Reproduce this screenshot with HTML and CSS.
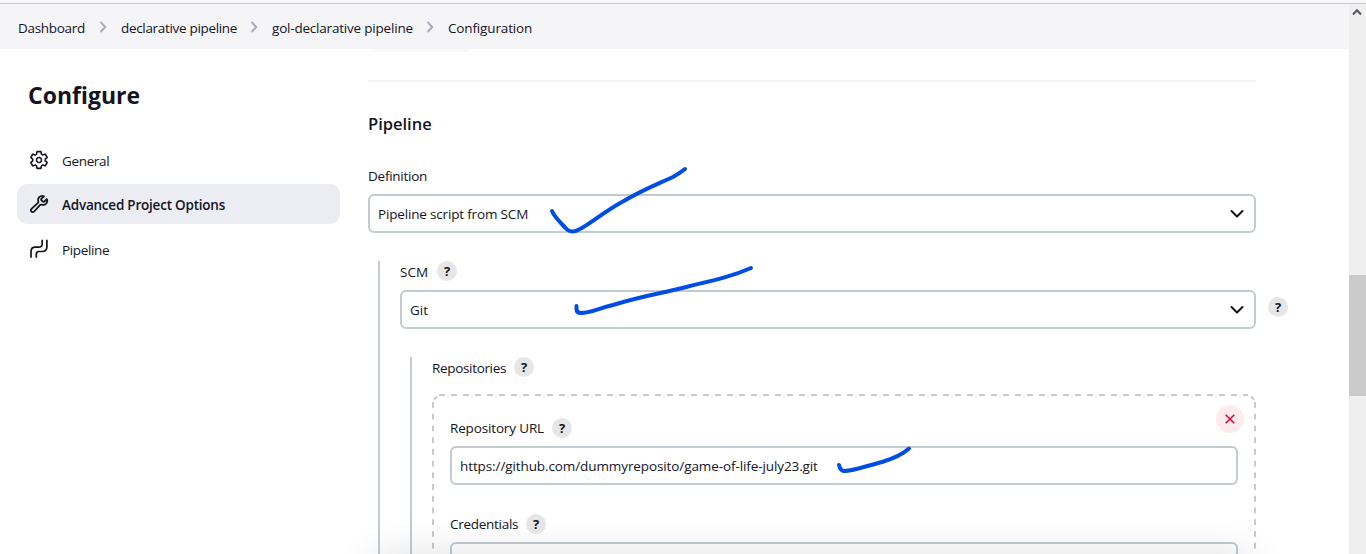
FILE: index.html
```
<!DOCTYPE html>
<html lang="en">
<head>
<meta charset="utf-8">
<title>Configure</title>
<link rel="stylesheet" href="styles.css">
</head>
<body>
<div class="window">
  <header class="crumbs">
    <span class="crumb c1">Dashboard</span>
    <svg class="sep" width="8" height="12" viewBox="0 0 8 12"><path d="M1.500 1 6.300 6 1.500 11"/></svg>
    <span class="crumb c2">declarative pipeline</span>
    <svg class="sep" width="8" height="12" viewBox="0 0 8 12"><path d="M1.500 1 6.300 6 1.500 11"/></svg>
    <span class="crumb c3">gol-declarative pipeline</span>
    <svg class="sep" width="8" height="12" viewBox="0 0 8 12"><path d="M1.500 1 6.300 6 1.500 11"/></svg>
    <span class="crumb c4">Configuration</span>
  </header>
  <div class="body">
    <aside class="side">
      <h1 class="title">Configure</h1>
      <nav class="nav">
        <a class="task"><svg class="ticon" viewBox="0 0 512 512"><path d="M262.29 192.31a64 64 0 1057.4 57.4 64.13 64.13 0 00-57.4-57.4zM416.39 256a154.34 154.34 0 01-1.53 20.79l45.21 35.46a10.81 10.81 0 012.45 13.75l-42.77 74a10.81 10.81 0 01-13.14 4.59l-44.9-18.08a16.11 16.11 0 00-15.17 1.75A164.48 164.48 0 01325 400.8a15.94 15.94 0 00-8.82 12.14l-6.73 47.89a11.08 11.08 0 01-10.68 9.17h-85.54a11.11 11.11 0 01-10.69-8.87l-6.72-47.82a16.07 16.07 0 00-9-12.22 155.3 155.3 0 01-21.46-12.57 16 16 0 00-15.11-1.71l-44.89 18.07a10.81 10.81 0 01-13.14-4.58l-42.77-74a10.8 10.8 0 012.45-13.75l38.21-30a16.05 16.05 0 006-14.08c-.36-4.17-.58-8.33-.58-12.5s.21-8.27.58-12.35a16 16 0 00-6.07-13.94l-38.19-30A10.81 10.81 0 0149.48 186l42.77-74a10.81 10.81 0 0113.14-4.59l44.9 18.08a16.11 16.11 0 0015.17-1.75A164.48 164.48 0 01187 111.2a15.94 15.94 0 008.82-12.14l6.73-47.89A11.08 11.08 0 01213.23 42h85.54a11.11 11.11 0 0110.69 8.87l6.72 47.82a16.07 16.07 0 009 12.22 155.3 155.3 0 0121.46 12.57 16 16 0 0015.11 1.71l44.89-18.07a10.81 10.81 0 0113.14 4.58l42.77 74a10.8 10.8 0 01-2.45 13.75l-38.21 30a16.05 16.05 0 00-6.05 14.08c.33 4.14.55 8.3.55 12.47z"/></svg><span class="w-general">General</span></a>
        <a class="task active"><svg class="ticon" viewBox="0 0 512 512"><path d="M393.87 190a32.1 32.1 0 01-45.25 0l-26.57-26.57a32.09 32.09 0 010-45.26L382.19 58a1 1 0 00-.3-1.64c-38.82-16.64-89.15-8.16-121.11 23.57-30.58 30.35-32.32 76-21.12 115.84a31.93 31.93 0 01-9.06 32.08L64 380a48.17 48.17 0 1068 68l153.86-167a31.93 31.93 0 0131.6-9.13c39.54 10.59 84.54 8.6 114.72-21.19 32.49-32 39.5-88.56 23.75-120.93a1 1 0 00-1.6-.26z"/></svg><span class="w-adv">Advanced Project Options</span></a>
        <a class="task"><svg class="ticon" viewBox="0 0 20 20"><path d="M2 18.700V12.600Q2 8.200 6.300 8.200H9.500Q13.200 8.200 13.200 5V.800M7.300 18.700V15Q7.300 12.500 9.800 12.500H13Q17.900 12.500 17.900 8V.800"/></svg><span class="w-pipe">Pipeline</span></a>
      </nav>
    </aside>
    <main class="main">
      <div class="stub"></div>
      <hr class="rule">
      <h2 class="section">Pipeline</h2>
      <div class="label w-def">Definition</div>
      <div class="field"><span class="w-script">Pipeline script from SCM</span><svg class="caret" width="16" height="10" viewBox="0 0 16 10"><path d="M2.500 2 8 7.500 13.500 2"/></svg></div>
      <div class="nest">
        <div class="row"><span class="label w-scm">SCM</span><span class="help">?</span></div>
        <div class="fieldrow">
          <div class="field grow"><span>Git</span><svg class="caret" width="16" height="10" viewBox="0 0 16 10"><path d="M2.500 2 8 7.500 13.500 2"/></svg></div>
          <span class="help outer">?</span>
        </div>
        <div class="nest inner">
          <div class="row"><span class="label w-repos">Repositories</span><span class="help">?</span></div>
          <div class="repo">
            <svg class="dash" width="824" height="170" viewBox="0 0 824 170">
              <path class="dh" d="M7 1H816"/>
              <path class="dv" d="M1 8V170M823 8V170"/>
              <path class="dc" d="M2 5.500 5 2.500M819 2.500 822 5.500"/>
            </svg>
            <span class="remove"><svg width="10" height="10" viewBox="0 0 10 10"><path d="M.7.700 9.300 9.300M9.300.700.7 9.300"/></svg></span>
            <div class="row"><span class="label w-url">Repository URL</span><span class="help">?</span></div>
            <div class="field"><span class="w-link">https://github.com/dummyreposito/game-of-life-july23.git</span></div>
            <div class="row second"><span class="label w-cred">Credentials</span><span class="help">?</span></div>
            <div class="field"></div>
          </div>
        </div>
      </div>
    </main>
    <div class="bottomshade"></div>
  </div>
  <div class="scroll"><svg class="up" width="10" height="8" viewBox="0 0 10 8"><path d="M1 6.500 5 2.300 9 6.500"/></svg><div class="thumb"></div></div>
  <svg class="ink" width="1366" height="554" viewBox="0 0 1366 554">
    <path d="M552 211C555 218 561 223 567 229.500Q572 233.500 579 229.500C589 225 602 213 622 202C646 188 658 184 673 177Q680 173 685 169"/>
    <path d="M576.500 306V309Q576.500 313 581 313C590 313 597 309 613 305C645 295 660 294 690 286C715 280 733 276 751 268"/>
    <path d="M839 465C840 469 841 471 844 471C853 471 870 465 882 462C895 458 903 454 909 448.500"/>
  </svg>
</div>
</body>
</html>
```
FILE: styles.css
```
* { box-sizing: border-box; }
body { margin: 0; background: #fff; color: #14141f; font: 13.5px/20px "Open Sans", "Noto Sans", sans-serif; }
.window { position: relative; width: 1366px; height: 554px; overflow: hidden; border-top: 3px solid #f8f8fa; display: grid; grid-template: 46px 505px / 1349px 17px; }
svg { fill: none; flex: none; }
span, h1, h2, .label { white-space: nowrap; }
.crumbs { background: #f5f5f8; border-top: 1px solid #c8c8cb; display: flex; align-items: center; padding: 3px 0 0 18px; }
.crumb { display: block; }
.c1 { width: 81px; letter-spacing: -.3px; }
.c2 { width: 129px; letter-spacing: -.32px; }
.c3 { width: 154px; letter-spacing: -.2px; }
.c4 { letter-spacing: -.15px; }
.sep { margin: -3px 14px 0 0; stroke: #a9a9b8; stroke-width: 1.9; }
.body { grid-row: 2; grid-column: 1; display: flex; position: relative; overflow: hidden; }
.side { width: 368px; padding: 29px 0 0 17px; flex: none; }
.title { margin: 0 0 0 11px; font-size: 23px; line-height: 34px; font-weight: 700; }
.nav { margin-top: 28px; width: 323px; display: grid; gap: 4px; }
.task { height: 40px; border-radius: 10px; display: flex; align-items: center; padding-left: 12px; gap: 13px; }
.task span { padding-top: 2px; }
.active { background: #ecedf3; font-weight: 600; }
.ticon { width: 20px; height: 20px; stroke: #14141f; stroke-width: 40; stroke-linecap: round; stroke-linejoin: round; }
.active .ticon { stroke-width: 46; }
.task:last-child { margin-top: 1px; }
.task:last-child .ticon { stroke-width: 1.7; stroke-linecap: butt; }
.w-general { letter-spacing: -.35px; }
.w-adv { letter-spacing: -.22px; }
.w-pipe { letter-spacing: -.35px; }
.main { width: 920px; flex: none; }
.stub { height: 3px; width: 99px; margin-left: 3px; background: #f8f8fb; border-radius: 0 0 10px 10px; }
.rule { width: 888px; height: 2px; background: #f2f2f7; border: 0; margin: 28px 0 0; }
.section { font-size: 16.5px; line-height: 24px; font-weight: 600; margin: 30px 0 30px; }
.label { line-height: 20px; }
.w-def { height: 28px; letter-spacing: -.25px; }
.w-script { letter-spacing: -.17px; }
.field { width: 888px; height: 39px; border: 2px solid #c1cbd0; border-radius: 6px; background: #fff; display: flex; align-items: center; padding: 0 8px; justify-content: space-between; }
.caret { margin-right: 1px; stroke: #14141f; stroke-width: 2; stroke-linecap: round; stroke-linejoin: round; }
.nest { margin: 28px 0 0 10px; border-left: 2px solid #c1cbd0; padding-left: 20px; height: 330px; }
.row { display: flex; height: 29px; align-items: flex-start; }
.row .label { padding-top: 1px; }
.help { width: 20px; height: 20px; border-radius: 50%; background: #e6e6e6; font-size: 13px; line-height: 20px; font-weight: 700; text-align: center; flex: none; }
.w-scm { width: 37px; }
.w-repos { width: 82px; letter-spacing: -.33px; }
.w-url { width: 102px; letter-spacing: -.15px; }
.w-cred { width: 76px; letter-spacing: -.28px; }
.w-link { letter-spacing: -.1px; }
.fieldrow { display: flex; gap: 12px; }
.grow { width: 856px; }
.outer { margin-top: 7px; }
.inner { height: 240px; }
.inner > .row { height: 37px; }
.repo { position: relative; width: 824px; padding: 24px 18px 0; }
.repo .row { height: 28px; }
.repo .row .label { padding-top: 0; }
.repo .field { width: 788px; }
.repo .second { margin-top: 29px; }
.dash { position: absolute; left: 0; top: 0; stroke: #c1cbd0; stroke-width: 2; }
.dh { stroke-dasharray: 6 6; }
.dv { stroke-dasharray: 5.8 5.93; }
.remove { position: absolute; right: 12px; top: 11px; width: 28px; height: 28px; border-radius: 50%; background: #fdebed; display: flex; align-items: center; justify-content: center; }
.remove svg { stroke: #e6002e; stroke-width: 1.5; }
.bottomshade { position: absolute; left: 375px; bottom: -45px; width: 874px; height: 45px; box-shadow: 0 0 40px rgba(0,0,0,.12); }
.scroll { grid-column: 2; grid-row: 1 / 3; border-top: 1px solid #c8c8cb; background: #efefef; }
.up { display: block; margin: 4px 0 0 3px; stroke: #555; stroke-width: 2; }
.thumb { margin-top: 259px; height: 121px; background: #cbcbcb; }
.ink { position: absolute; left: 0; top: -3px; stroke: #004de6; stroke-width: 4; stroke-linecap: round; stroke-linejoin: round; pointer-events: none; }
```
